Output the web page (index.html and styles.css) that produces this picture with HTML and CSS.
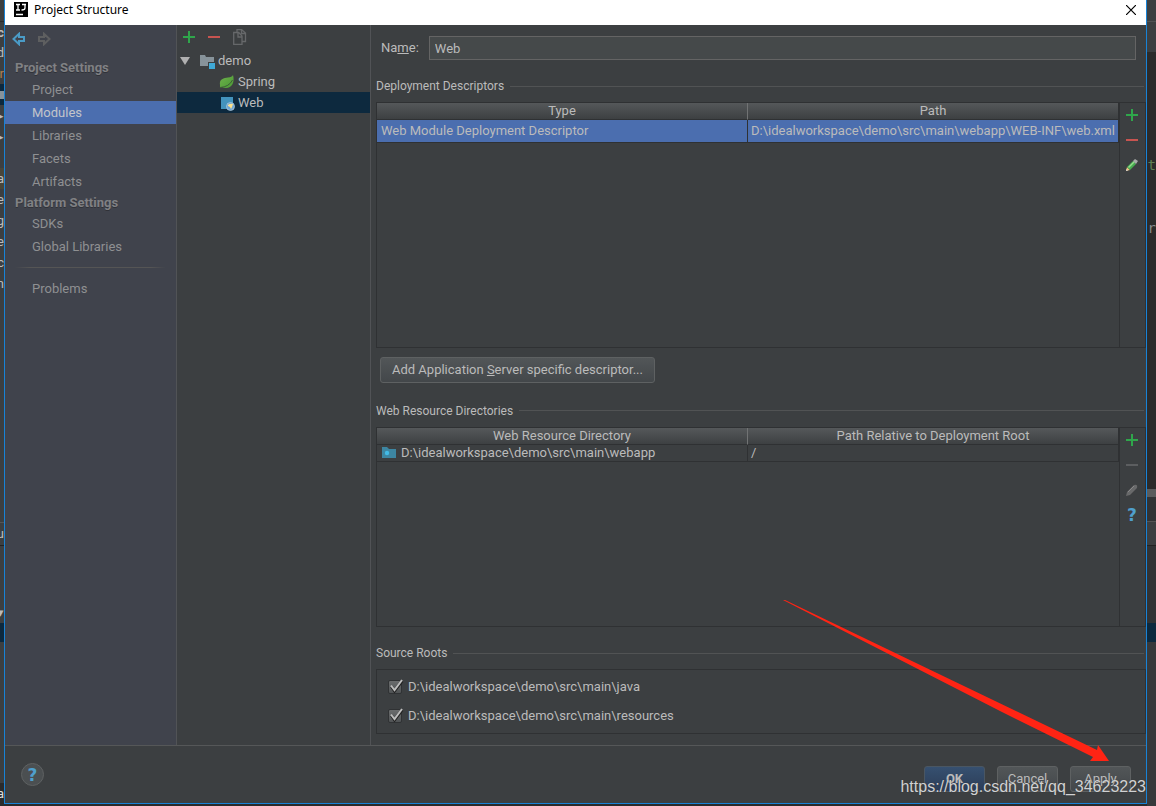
FILE: index.html
```html
<!DOCTYPE html>
<html lang="en">
<head>
<meta charset="utf-8">
<title>Project Structure</title>
<link rel="stylesheet" href="styles.css">
</head>
<body>
<svg class="defs" width="0" height="0" aria-hidden="true">
  <defs>
    <linearGradient id="leaf" x1="0" y1="0" x2="1" y2="1"><stop offset="0" stop-color="#6fb04c"/><stop offset="1" stop-color="#4a9a35"/></linearGradient>
    <symbol id="plus" viewBox="0 0 12 12"><path d="M5 0h2v5h5v2H7v5H5V7H0V5h5z" fill="#2fa64b"/></symbol>
    <symbol id="minus" viewBox="0 0 12 12"><path d="M0 5h12v2H0z" fill="currentColor"/></symbol>
    <symbol id="arrow" viewBox="0 0 14 14"><path d="M1.500 7 7 1.800V5h5v4H7v3.200z" fill="none" stroke="currentColor" stroke-width="2"/></symbol>
    <symbol id="check" viewBox="0 0 16 16"><path d="M3.500 7.500 6.500 12 14 2" fill="none" stroke="#222" stroke-width="3"/><path d="M3 6.500 6.500 11 14 1" fill="none" stroke="#bdbdbd" stroke-width="2"/></symbol>
  </defs>
</svg>
<div class="desktop">
  <div class="edge edge-left" aria-hidden="true">
    <span class="bright">c</span><span>d</span><span class="warm">r</span><span class="sel"></span><span>▸</span><span>▸</span><span></span><span class="olive">a</span><span>e</span><span>g</span><span>e</span><span>c</span><span>n</span>
    <div class="edge-bottom"><span class="lined">u</span><span class="tick">▾</span><span class="navy"></span><span class="last">a</span></div>
  </div>

  <main class="dialog">
    <header class="titlebar">
      <svg class="logo" viewBox="0 0 14 15"><path d="M0 0h14v15H0z" fill="#000"/><path d="M2 2.500h4M4 2v6M2 8h4M8 2.500h4M11 2v4q0 2-3.500 2M2 12.500h7" fill="none" stroke="#fff" stroke-width="1.300"/></svg>
      <h1>Project Structure</h1>
      <button class="close" aria-label="Close"><svg viewBox="0 0 10 10"><path d="M0 0l10 10M10 0L0 10" stroke="#000" stroke-width="1.200"/></svg></button>
    </header>

    <div class="body">
      <nav class="sidebar">
        <div class="history">
          <button aria-label="Back" class="back"><svg><use href="#arrow"/></svg></button>
          <button aria-label="Forward" class="forward"><svg><use href="#arrow"/></svg></button>
        </div>
        <h2>Project Settings</h2>
        <a href="#">Project</a>
        <a href="#" class="active">Modules</a>
        <a href="#">Libraries</a>
        <a href="#">Facets</a>
        <a href="#">Artifacts</a>
        <h2>Platform Settings</h2>
        <a href="#">SDKs</a>
        <a href="#">Global Libraries</a>
        <hr>
        <a href="#">Problems</a>
      </nav>

      <section class="tree">
        <div class="tree-tools">
          <button aria-label="Add"><svg class="i12"><use href="#plus"/></svg></button>
          <button aria-label="Remove" class="red"><svg class="i12"><use href="#minus"/></svg></button>
          <button aria-label="Copy"><svg class="copy" viewBox="0 0 14 16"><path d="M.700 3.500h5L9 7v8.500H.700zM5 4v4h4M4 3.500v-3h4.500L12.500 4v8.500H9M8.500 1v3.500h4" fill="none" stroke="#66686a" stroke-width="1.300"/></svg></button>
        </div>
        <ul>
          <li><svg class="twisty" viewBox="0 0 10 8"><path d="M0 0h10L5 8z" fill="#b0b0b0"/></svg><svg class="i16" viewBox="0 0 16 16"><path d="M1 2h5l1 2h8v9H1z" fill="#87939a"/><path d="M9 9h7v7H9z" fill="#3c3f41"/><path d="M10 10h6v6h-6z" fill="#3fa9d6"/></svg>demo</li>
          <li class="child"><svg class="i16" viewBox="0 0 16 16"><path d="M1 11C0 5 5 4 9 3.500q4-.5 5-2.500C16 8 13 14 7 14q-3 0-4-1l-2 1z" fill="url(#leaf)"/><path d="M1 13.500Q10 13 13.500 6" fill="none" stroke="#3c5c36" stroke-width="1"/></svg>Spring</li>
          <li class="child selected"><svg class="i16" viewBox="0 0 16 16"><path d="M2 2h12v12H2z" fill="#4393bd"/><circle cx="11.500" cy="11.500" r="4" fill="#6da5d4" stroke="#b9cddb" stroke-width=".7"/><path d="M9 10q2-2 5-1l-1 3-1 2-1-2-2-1z" fill="#ffe28b"/></svg>Web</li>
        </ul>
      </section>

      <section class="content">
        <div class="name"><label for="name">Na<u>m</u>e:</label><input id="name" type="text" value="Web"></div>

        <h3>Deployment Descriptors</h3>
        <div class="panel panel-large">
          <div class="grid">
            <table>
              <thead><tr><th>Type</th><th>Path</th></tr></thead>
              <tbody><tr class="selected"><td>Web Module Deployment Descriptor</td><td>D:\idealworkspace\demo\src\main\webapp\WEB-INF\web.xml</td></tr></tbody>
            </table>
          </div>
          <div class="tools">
            <button aria-label="Add descriptor"><svg class="i12"><use href="#plus"/></svg></button>
            <button aria-label="Remove descriptor" class="red"><svg class="i12"><use href="#minus"/></svg></button>
            <button aria-label="Edit descriptor"><svg class="i12" viewBox="0 0 12 12"><path d="M0 12l1-4 3 3z" fill="#f0c17c"/><path d="M1 8l6-6 3 3-6 6z" fill="#47ad50"/><path d="M2 8l6-6 1 1-6 6z" fill="#94dc8c"/><path d="M7 2l2-2 3 2-2 3z" fill="#a6aaa8"/><path d="M0 12l.5-2L2 11.500z" fill="#ddd"/></svg></button>
          </div>
        </div>
        <button class="btn wide">Add Application <u>S</u>erver specific descriptor...</button>

        <h3>Web Resource Directories</h3>
        <div class="panel panel-small">
          <div class="grid">
            <table>
              <thead><tr><th>Web Resource Directory</th><th>Path Relative to Deployment Root</th></tr></thead>
              <tbody><tr class="plain"><td><svg class="folder" viewBox="0 0 14 11"><path d="M0 0h5l2 2h7v9H0z" fill="#3d86a2"/><circle cx="5" cy="6" r="2.200" fill="#43bae5"/></svg>D:\idealworkspace\demo\src\main\webapp</td><td>/</td></tr></tbody>
            </table>
          </div>
          <div class="tools">
            <button aria-label="Add directory"><svg class="i12"><use href="#plus"/></svg></button>
            <button aria-label="Remove directory" class="gray" disabled><svg class="i12"><use href="#minus"/></svg></button>
            <button aria-label="Edit directory" disabled><svg class="i12" viewBox="0 0 12 12"><path d="M0 12l1-4 7-7q4-1 3 3l-7 7z" fill="#68696a"/><path d="M2 8l6-6" stroke="#888" stroke-width="1"/></svg></button>
            <button aria-label="Help" class="question">?</button>
          </div>
        </div>

        <h3>Source Roots</h3>
        <div class="roots">
          <label><input type="checkbox" checked><svg class="i16"><use href="#check"/></svg>D:\idealworkspace\demo\src\main\java</label>
          <label><input type="checkbox" checked><svg class="i16"><use href="#check"/></svg>D:\idealworkspace\demo\src\main\resources</label>
        </div>
      </section>
    </div>

    <footer>
      <button class="help" aria-label="Help">?</button>
      <button class="btn ok">OK</button>
      <button class="btn">Cancel</button>
      <button class="btn">Apply</button>
    </footer>
  </main>

  <div class="edge edge-right" aria-hidden="true">
    <div class="r-top"></div>
    <div class="r-code"><span>t</span><span class="grayed">r</span></div>
    <div class="r-bar"></div>
    <div class="r-tabs"></div>
    <div class="r-mid"></div>
    <div class="r-navy"></div>
    <div class="r-rest"></div>
  </div>

  <svg class="pointer" viewBox="0 0 326 162" aria-hidden="true"><path d="M0 0 2 0 314 150 315 145 326 161 307 161 310 157 217 111z" fill="#ff2414"/></svg>
  <div class="watermark">https://blog.csdn.net/qq_34623223</div>
</div>
</body>
</html>
```
FILE: styles.css
```css
* { box-sizing: border-box; }
body {
  margin: 0;
  background: #2b2b2b;
  color: #bbbbbb;
  font: 13px/20px Roboto, "Noto Sans", sans-serif;
}
button { font: inherit; color: inherit; background: none; border: 0; padding: 0; }
h1, h2, h3, ul { margin: 0; padding: 0; font-weight: 400; }
svg { display: block; flex: none; }
.defs { position: absolute; }
.i12 { width: 12px; height: 12px; }
.i16 { width: 16px; height: 16px; }
.red { color: #c75450; }
.gray { color: #5c5e60; }

.desktop {
  position: relative;
  display: grid;
  grid-template-columns: 4px minmax(0, 1fr) 9px;
  min-height: 100vh;
  overflow: hidden;
}

/* Slivers of the IDE window behind the dialog */
.edge { display: flex; flex-direction: column; overflow: hidden; background: #3c3f41; }
.edge-left { padding-top: 21px; border-bottom: 2px solid #2b2b2b; }
.edge-left span { display: flex; justify-content: flex-end; height: 21px; flex: none; line-height: 21px; }
.edge-left .bright { font-weight: 700; border-top: 1px solid #2b2b2b; }
.edge-left .warm { color: #b08050; }
.edge-left .sel { background: linear-gradient(#0d293e 7px, #87939a 7px 15px, #0d293e 15px); }
.edge-left .olive { background: #49463a; }
.edge-bottom { margin-top: auto; height: 282px; display: flex; flex-direction: column; }
.edge-left .lined { height: 24px; border-top: 1px solid #555; border-bottom: 1px solid #222; }
.edge-left .tick { height: 77px; align-items: flex-end; }
.edge-left .navy { height: 19px; background: #0d293e; }
.edge-left .last { margin-top: auto; background: #2b2b2b; color: #ddd; }
.edge-right { font-family: "DejaVu Sans Mono", monospace; font-size: 14px; }
.r-top { height: 53px; background: linear-gradient(#3c3f41 21px, #505254 21px 22px, #3c3f41 22px 52px, #2b2b2b 52px); }
.r-code { height: 436px; padding-top: 102px; background: #2b2b2b; color: #5f7f54; display: flex; flex-direction: column; gap: 43px; align-items: flex-end; }
.grayed { color: #878b8f; }
.r-bar { height: 8px; background: #5a5c5d; }
.r-tabs { height: 25px; background: #313335; border-bottom: 1px solid #555; }
.r-mid { height: 101px; background: linear-gradient(#3c3f41 23px, #222 23px 24px, #313335 24px); }
.r-navy { height: 19px; background: #0d293e; }
.r-rest { flex: 1; background: #37393b; }

.dialog {
  display: flex;
  flex-direction: column;
  margin-bottom: 2px;
  border: 1px solid #1883d7;
  border-top: 0;
  background: #3c3f41;
}
.titlebar { display: flex; align-items: center; height: 25px; padding: 0 10px 6px 9px; gap: 6px; background: #fff; color: #000; }
.titlebar h1 { flex: 1; font-family: "Noto Sans", sans-serif; font-size: 12px; }
.logo { width: 14px; height: 15px; }
.close svg { width: 10px; height: 10px; }

.body {
  flex: 1;
  display: grid;
  grid-template-columns: 172px 194px minmax(0, 1fr);
  border-bottom: 1px solid #555758;
}
.sidebar { background: #40434c; border-right: 1px solid #515356; color: #8f9092; }
.history { display: flex; gap: 11px; padding: 7px 7px 4px; height: 33px; }
.history svg { width: 14px; height: 14px; }
.back { color: #4a9bc6; align-self: flex-start; }
.forward { color: #5e5f60; transform: scaleX(-1); align-self: flex-start; }
.sidebar h2 { height: 20px; padding-left: 10px; font-size: 13px; line-height: 20px; font-weight: 700; color: #808184; text-shadow: 0 1px #303238; }
.sidebar a { display: block; height: 23px; padding-left: 27px; line-height: 23px; color: inherit; text-decoration: none; }
.sidebar a + h2 { height: 19px; line-height: 19px; }
.sidebar .active { background: #4b6eaf; color: #c2c5ca; }
.sidebar hr { height: 1px; margin: 9px 10px; border: 0; background: linear-gradient(90deg, transparent, #555 10%, #555 90%, transparent); }

.tree { border-right: 1px solid #515356; }
.tree-tools { display: flex; align-items: center; gap: 13px; height: 25px; padding: 0 6px 1px; }
.copy { width: 14px; height: 16px; }
.tree ul { list-style: none; }
.tree li { display: flex; align-items: center; gap: 3px; height: 21px; padding-left: 3px; }
.twisty { width: 10px; height: 8px; margin-right: 6px; }
.tree .child { padding-left: 42px; }
.tree .selected { background: #0d293e; }

.content { display: flex; flex-direction: column; padding: 11px 0 11px 5px; }
.name { display: flex; align-items: center; gap: 10px; padding: 0 10px 0 5px; }
.name input {
  flex: 1;
  height: 24px;
  padding: 0 5px;
  font: inherit;
  color: inherit;
  background: #45494a;
  border: 1px solid #646464;
}
.content h3 { display: flex; align-items: center; gap: 6px; height: 20px; margin: 16px 2px 6px 0; font-size: 12px; }
.panel { display: flex; border: 1px solid #2f3133; flex-basis: 0; min-height: 120px; }
.content h3::after { content: ""; flex: 1; height: 1px; background: #515354; }
.panel-large { flex-grow: 246; }
.panel-small { flex-grow: 200; }
.grid { flex: 1; min-width: 0; }
table { width: 100%; table-layout: fixed; border-collapse: separate; border-spacing: 0; }
th, td { padding: 0; font-weight: 400; line-height: 16px; white-space: nowrap; overflow: hidden; border-right: 1px solid #2f3133; border-bottom: 1px solid #2f3133; }
th { height: 17px; background: linear-gradient(#55585a, #3d4042); }
th:first-child { border-right-color: #717374; }
td { height: 17px; padding: 0 4px; text-align: left; }
td + td { padding: 0 0 0 3px; }
.selected td { height: 23px; background: #4b6eaf; }
.folder { width: 14px; height: 11px; display: inline-block; margin: 0 5px 0 1px; vertical-align: -1px; }
.tools { display: flex; flex-direction: column; align-items: center; width: 26px; padding: 6px 1px 0 0; gap: 13px; border-left: 1px solid #2f3133; }
.tools button { height: 12px; }
.tools .question, .help { color: #4f9fcc; font: 700 17px/12px "DejaVu Sans", sans-serif; }

.btn {
  min-width: 61px;
  height: 26px;
  border: 1px solid #5e6162;
  border-radius: 3px;
  background: linear-gradient(#525658, #43474a);
}
.btn.wide { align-self: flex-start; margin: 9px 0 2px 4px; padding: 0 11px; }
.roots { display: flex; flex-direction: column; gap: 9px; height: 65px; padding: 7px 10px; border: 1px solid #2f3133; }
.roots label { display: flex; align-items: center; gap: 4px; height: 20px; }
.roots input { appearance: none; width: 14px; height: 14px; margin: 0 -18px 0 1px; background: linear-gradient(#6a6c6d, #505355); border: 1px solid #303234; border-radius: 2px; }
.roots svg { position: relative; }

footer { display: flex; align-items: flex-start; gap: 12px; height: 57px; padding: 20px 15px 0 16px; }
.help { width: 23px; height: 23px; margin: -3px auto 0 0; border: 1px solid #5e6162; border-radius: 50%; background: #4b4f51; }
.ok { background: linear-gradient(#365070, #2c3d57); border-color: #4a5662; font-weight: 700; }

.pointer { position: absolute; right: 47px; bottom: 44px; width: 326px; height: 162px; pointer-events: none; }
.watermark { position: absolute; right: 10px; bottom: 9px; font: 16px/20px "Liberation Sans", Arial, sans-serif; color: #d0d1d2; text-shadow: 0 0 1px #333; pointer-events: none; }
```
